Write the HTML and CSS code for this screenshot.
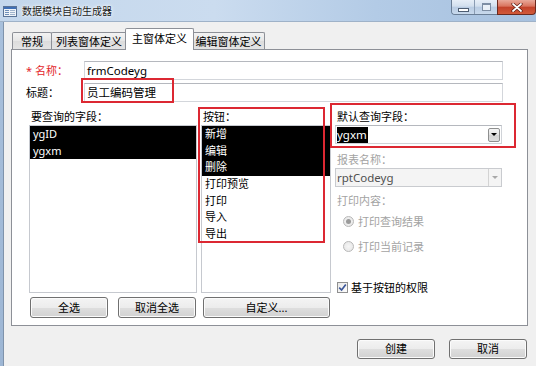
FILE: index.html
```html
<!DOCTYPE html>
<html lang="zh-CN">
<head>
  <meta charset="UTF-8">
  <title>数据模块自动生成器</title>
  <link rel="stylesheet" href="styles.css">
</head>
<body>
  <div class="window">
    <div class="titlebar">
      <svg class="app-icon" width="14" height="11" viewBox="0 0 14 11">
        <rect x="0.5" y="0.5" width="13" height="10" fill="#eef3f8" stroke="#5a7396"/>
        <rect x="1" y="1" width="12" height="2" fill="#3f6fb5"/>
        <rect x="2" y="4" width="4" height="1" fill="#6f8fb8"/>
        <rect x="7" y="4" width="5" height="1" fill="#9fb3cc"/>
        <rect x="2" y="6" width="4" height="1" fill="#6f8fb8"/>
        <rect x="7" y="6" width="5" height="1" fill="#9fb3cc"/>
        <rect x="2" y="8" width="4" height="1" fill="#6f8fb8"/>
        <rect x="7" y="8" width="5" height="1" fill="#9fb3cc"/>
      </svg>
      <span class="title">数据模块自动生成器</span>
      <div class="caption-buttons">
        <div class="cap-group">
          <span class="cap cap-min"><i></i></span>
          <span class="cap cap-max"><i></i></span>
        </div>
        <span class="cap cap-close">
          <svg width="12" height="9" viewBox="0 0 12 9">
            <path d="M2 1 L10 8 M10 1 L2 8" stroke="#5a1a10" stroke-width="3.2" stroke-linecap="round"/>
            <path d="M2 1 L10 8 M10 1 L2 8" stroke="#fff" stroke-width="1.8" stroke-linecap="round"/>
          </svg>
        </span>
      </div>
    </div>

    <div class="frame">
      <div class="frame-edge"></div>
      <div class="client">
        <div class="tabs">
          <div class="tab t1">常规</div>
          <div class="tab t2">列表窗体定义</div>
          <div class="tab t3 active">主窗体定义</div>
          <div class="tab t4">编辑窗体定义</div>
        </div>

        <div class="panel">
          <div class="field-row first">
            <span class="field-label required">* 名称：</span>
            <div class="textbox">frmCodeyg</div>
          </div>
          <div class="field-row">
            <span class="field-label">标题：</span>
            <div class="textbox">员工编码管理</div>
          </div>

          <div class="columns">
            <div class="col col-fields">
              <div class="col-label">要查询的字段：</div>
              <ul class="listbox">
                <li class="sel">ygID</li>
                <li class="sel">ygxm</li>
              </ul>
              <div class="btn-row">
                <button class="btn">全选</button>
                <button class="btn">取消全选</button>
              </div>
            </div>

            <div class="col col-buttons">
              <div class="col-label">按钮：</div>
              <ul class="listbox">
                <li class="sel">新增</li>
                <li class="sel">编辑</li>
                <li class="sel">删除</li>
                <li>打印预览</li>
                <li>打印</li>
                <li>导入</li>
                <li>导出</li>
              </ul>
              <div class="btn-row">
                <button class="btn btn-custom">自定义...</button>
              </div>
            </div>

            <div class="col col-options">
              <div class="col-label">默认查询字段：</div>
              <div class="combo">
                <span class="combo-text"><span class="hl">ygxm</span></span>
                <span class="combo-btn"><i></i></span>
              </div>

              <div class="col-label muted report-label">报表名称：</div>
              <div class="combo disabled">
                <span class="combo-text">rptCodeyg</span>
                <span class="combo-btn"><i></i></span>
              </div>

              <div class="col-label muted print-label">打印内容：</div>
              <div class="radio-row r1">
                <span class="radio checked"></span>
                <span>打印查询结果</span>
              </div>
              <div class="radio-row r2">
                <span class="radio"></span>
                <span>打印当前记录</span>
              </div>

              <div class="check-row">
                <span class="checkbox">
                  <svg width="9" height="9" viewBox="0 0 9 9">
                    <path d="M1.2 4.6 L3.6 7 L7.8 1.6" fill="none" stroke="#3b5698" stroke-width="1.7"/>
                  </svg>
                </span>
                <span>基于按钮的权限</span>
              </div>
            </div>
          </div>

          <!-- red annotation boxes drawn over the dialog -->
          <div class="mark mark-title"></div>
          <div class="mark mark-buttons"></div>
          <div class="mark mark-default"></div>
        </div>

        <div class="footer">
          <button class="btn btn-footer">创建</button>
          <button class="btn btn-footer">取消</button>
        </div>
      </div>
    </div>
  </div>
</body>
</html>
```

FILE: styles.css
```css
html, body {
  margin: 0;
  padding: 0;
  background: #f0f0f0;
}
body {
  font-family: "Noto Sans", "Noto Sans CJK SC", sans-serif;
  font-size: 11px;
  color: #000;
}
.window {
  width: 536px;
  height: 366px;
  overflow: hidden;
  display: flex;
  flex-direction: column;
}

/* title bar */
.titlebar {
  height: 22px;
  flex: none;
  display: flex;
  align-items: flex-start;
  background: linear-gradient(90deg, #c4d7ec 0%, #cbdcef 40%, #b3cbe6 70%, #a7c1df 100%);
  border-bottom: 1px solid #9fb2c8;
  box-sizing: border-box;
}
.app-icon {
  margin: 6px 0 0 3px;
  flex: none;
}
.title {
  margin: 4px 0 0 5px;
  font-size: 10px;
  line-height: 14px;
  color: #1b1b1b;
  text-shadow: 0 0 4px #fff, 0 0 2px #fff;
}
.caption-buttons {
  margin-left: auto;
  display: flex;
  height: 15px;
}
.cap-group {
  display: flex;
  border: 1px solid #6a7e96;
  border-top: none;
  border-right: none;
  border-radius: 0 0 0 4px;
  overflow: hidden;
}
.cap {
  display: flex;
  align-items: center;
  justify-content: center;
  height: 14px;
  background: linear-gradient(#e6eef7 0%, #d2dfee 45%, #b9cce3 50%, #c8d9ec 100%);
}
.cap-min {
  width: 22px;
  border-right: 1px solid #8a9cb3;
}
.cap-min i {
  display: block;
  width: 9px;
  height: 2px;
  margin-top: 5px;
  background: #fff;
  border: 1px solid #4d5d72;
}
.cap-max {
  width: 22px;
}
.cap-max i {
  display: block;
  width: 7px;
  height: 5px;
  border: 1px solid #7d8ea4;
  border-top-width: 2px;
  background: #e9f0f7;
}
.cap-close {
  width: 39px;
  height: 15px;
  border: 1px solid #6b2a1f;
  border-top: none;
  border-radius: 0 0 4px 0;
  box-sizing: border-box;
  background: linear-gradient(#e9a99a 0%, #d9735d 45%, #c2412a 50%, #d15a3a 100%);
}

/* window body */
.frame {
  flex: 1;
  display: flex;
}
.frame-edge {
  width: 3px;
  background: linear-gradient(#a8c0dc, #9db6d4);
  border-right: 1px solid #7f93ab;
}
.client {
  flex: 1;
  padding: 6px 0 0 7px;
  background: #f0f0f0;
}

/* tabs */
.tabs {
  display: flex;
  align-items: flex-end;
  height: 21px;
  padding-left: 1px;
}
.tab {
  height: 17px;
  box-sizing: border-box;
  border: 1px solid #8d9097;
  border-bottom: none;
  border-radius: 2px 2px 0 0;
  background: linear-gradient(#f3f3f3, #e6e6e6 50%, #dcdcdc 51%, #e4e4e4);
  text-align: center;
  line-height: 17px;
  white-space: nowrap;
}
.t1 { width: 40px; }
.t2 { width: 76px; margin-left: -1px; }
.t3 { width: 69px; margin-left: -2px; }
.t4 { width: 73px; margin-left: -2px; }
.tab.active {
  height: 22px;
  margin-bottom: -1px;
  position: relative;
  z-index: 1;
  background: #fff;
  line-height: 20px;
}

/* tab page */
.panel {
  position: relative;
  width: 517px;
  height: 277px;
  box-sizing: border-box;
  border: 1px solid #8d9097;
  background: #fff;
  padding: 11px 24px 0 14px;
}
.field-row {
  display: flex;
  align-items: center;
  margin-top: 3px;
}
.field-row.first {
  margin-top: 0;
}
.field-label {
  width: 58px;
  flex: none;
  line-height: 19px;
}
.field-label.required {
  color: #e3262b;
}
.textbox {
  flex: 1;
  height: 19px;
  box-sizing: border-box;
  border: 1px solid #d3d6db;
  border-top-color: #b5b8be;
  padding-left: 2px;
  line-height: 17px;
  font-size: 11.5px;
}

.columns {
  display: grid;
  grid-template-columns: 168px 130px 167px;
  column-gap: 4px;
  margin: 6px 0 0 3px;
}
.col-label {
  height: 17px;
  line-height: 17px;
  padding-left: 2px;
}
.listbox {
  list-style: none;
  margin: 0;
  padding: 0;
  height: 168px;
  box-sizing: border-box;
  border: 1px solid #c6c9cf;
}
.listbox li {
  height: 16.67px;
  line-height: 16.67px;
  padding-left: 3px;
}
.listbox li.sel {
  background: #000;
  color: #fff;
}
.btn-row {
  display: flex;
  justify-content: space-between;
  padding: 4px 1px 0;
}
.btn {
  height: 21px;
  width: 78px;
  box-sizing: border-box;
  border: 1px solid #707070;
  border-radius: 3px;
  background: linear-gradient(#f4f4f4 0%, #ececec 50%, #dedede 51%, #d2d2d2 100%);
  box-shadow: inset 0 0 0 1px #fbfbfb;
  font-family: inherit;
  font-size: 11px;
  color: #000;
  padding: 0;
  line-height: 18px;
}
.btn-custom {
  width: 128px;
  margin-left: 1px;
}

/* right column */
.col-options {
  padding-left: 0;
}
.combo {
  display: flex;
  height: 19px;
  box-sizing: border-box;
  border: 1px solid #d0d3d8;
  border-top-color: #b5b8be;
  background: #fff;
  align-items: center;
}
.combo-text {
  flex: 1;
  padding-left: 1px;
  line-height: 15px;
  font-size: 11.5px;
}
.hl {
  background: #000;
  color: #fff;
  padding: 0 1px 1px 0;
}
.combo-btn {
  width: 12px;
  height: 14px;
  margin-right: 1px;
  box-sizing: border-box;
  border: 1px solid #8e8f8f;
  border-radius: 2px;
  background: linear-gradient(#f6f6f6, #e2e2e2 50%, #d4d4d4 51%, #dedede);
  display: flex;
  align-items: center;
  justify-content: center;
}
.combo-btn i {
  width: 0;
  height: 0;
  border-left: 3px solid transparent;
  border-right: 3px solid transparent;
  border-top: 3px solid #000;
}
.combo.disabled {
  background: #f4f4f4;
  border-color: #c9cbcf;
  color: #505050;
}
.combo.disabled .combo-btn {
  width: 13px;
  height: 17px;
  margin-right: 0;
  border: none;
  border-left: 1px solid #d3d3d3;
  border-radius: 0;
  background: #f4f4f4;
}
.combo.disabled .combo-btn i {
  border-top-color: #a8a8a8;
}
.muted {
  color: #a3a3a3;
}
.report-label {
  margin-top: 7px;
}
.print-label {
  margin-top: 5px;
}
.radio-row {
  display: flex;
  align-items: center;
  height: 16px;
  color: #a3a3a3;
  padding-left: 8px;
}
.r1 { margin-top: 4px; }
.r2 { margin-top: 9px; }
.radio {
  width: 11px;
  height: 11px;
  box-sizing: border-box;
  border: 1px solid #b8b8b8;
  border-radius: 50%;
  background: radial-gradient(circle, #f6f6f6, #e4e4e4);
  margin-right: 4px;
  position: relative;
}
.radio.checked::after {
  content: "";
  position: absolute;
  left: 2px;
  top: 2px;
  width: 5px;
  height: 5px;
  border-radius: 50%;
  background: #9a9a9a;
}
.check-row {
  display: flex;
  align-items: center;
  height: 16px;
  margin-top: 25px;
  padding-left: 2px;
}
.checkbox {
  width: 11px;
  height: 11px;
  box-sizing: border-box;
  border: 1px solid #8f8f8f;
  background: linear-gradient(135deg, #e8e8e8, #fdfdfd);
  margin-right: 3px;
  display: flex;
  align-items: center;
  justify-content: center;
}

/* footer */
.footer {
  display: flex;
  justify-content: flex-end;
  gap: 14px;
  width: 516px;
  margin-top: 13px;
}
.btn-footer {
  height: 20px;
}

/* annotation marks */
.mark {
  position: absolute;
  border: 2px solid #dc2832;
  box-sizing: border-box;
}
.mark-title {
  left: 69px;
  top: 28px;
  width: 93px;
  height: 25px;
}
.mark-buttons {
  left: 186px;
  top: 57px;
  width: 127px;
  height: 136px;
}
.mark-default {
  left: 318px;
  top: 53px;
  width: 186px;
  height: 45px;
}
```
